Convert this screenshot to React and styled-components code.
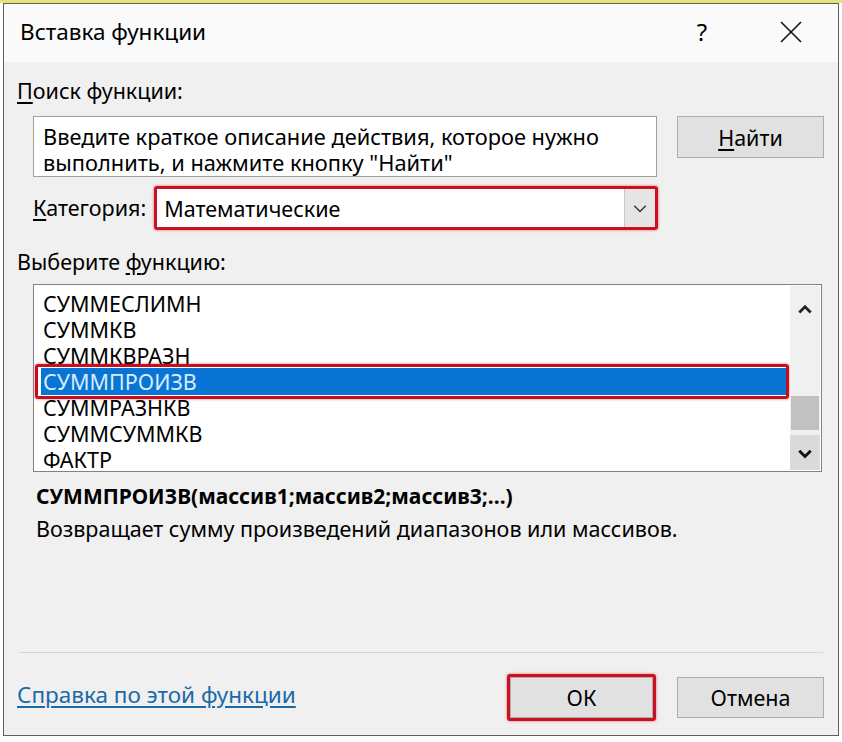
import React from "react";
import styled, { createGlobalStyle } from "styled-components";

const Global = createGlobalStyle`
  html, body { margin: 0; padding: 0; background: #ffffff; }
  body { font-family: "Noto Sans", "Open Sans", sans-serif; color: #000; }
`;

const Page = styled.div`
  width: 842px;
  height: 742px;
  padding: 3px 0 0 3px;
  box-sizing: border-box;
  background: linear-gradient(#e8e27a 0 3px, #ffffff 3px);
`;

const Dialog = styled.div`
  width: 836px;
  height: 733px;
  box-sizing: border-box;
  border: 1px solid #5e5e5e;
  background: #f0f0f0;
  display: flex;
  flex-direction: column;
`;

const TitleBar = styled.div`
  height: 58px;
  background: #fafafa;
  display: flex;
  align-items: center;
  padding: 0 0 3px 16px;
  box-sizing: border-box;
  flex-shrink: 0;
`;

const Title = styled.div`
  font-size: 22.5px;
  flex: 1;
`;

const TitleBtn = styled.div`
  width: ${p => p.$w}px;
  display: flex;
  justify-content: center;
  align-items: center;
  font-size: 24px;
`;

const Body = styled.div`
  flex: 1;
  display: flex;
  flex-direction: column;
  padding: 16px 14px 0 13px;
`;

const Label = styled.div`
  font-size: 21.5px;
  line-height: 26px;
  margin-top: ${p => p.$mt || 0}px;
`;

const U = styled.span`
  text-decoration: underline;
  text-underline-offset: 3px;
`;

const Row = styled.div`
  display: flex;
  align-items: ${p => p.$align || "center"};
  margin-top: ${p => p.$mt || 0}px;
  padding-left: ${p => p.$pl || 0}px;
`;

const SearchBox = styled.div`
  width: 624px;
  height: 61px;
  box-sizing: border-box;
  background: #fff;
  border: 1px solid #a0a0a0;
  padding: 7px 9px 0;
  font-size: 21.8px;
  line-height: 26px;
`;

const Button = styled.div`
  width: ${p => p.$w}px;
  height: ${p => p.$h}px;
  box-sizing: border-box;
  background: #e1e1e1;
  border: 1px solid #adadad;
  display: flex;
  align-items: center;
  justify-content: center;
  font-size: 21.5px;
  margin-left: ${p => p.$ml || 0}px;
`;

const RedFrame = styled.div`
  border: 3px solid #cc1020;
  border-radius: 3px;
  box-shadow: 0 0 3px rgba(210, 20, 30, 0.6);
  box-sizing: border-box;
  margin-left: ${p => p.$ml || 0}px;
  display: flex;
`;

const Select = styled.div`
  width: 498px;
  height: 38px;
  background: #fff;
  display: flex;
  align-items: center;
  font-size: 21.5px;
`;

const SelectText = styled.div`
  flex: 1;
  padding-left: 7px;
`;

const SelectArrow = styled.div`
  width: 30px;
  height: 100%;
  background: #e5e5e5;
  border-left: 1px solid #c8c8c8;
  display: flex;
  align-items: center;
  justify-content: center;
`;

const List = styled.div`
  margin: 9px 0 0 16px;
  width: 789px;
  height: 188px;
  box-sizing: border-box;
  border: 1px solid #828282;
  background: #fff;
  display: flex;
`;

const Items = styled.div`
  flex: 1;
  padding: 6px 0 0 1px;
  display: flex;
  flex-direction: column;
`;

const Item = styled.div`
  height: 26px;
  line-height: 26px;
  font-size: 21.5px;
  padding-left: 8px;
  color: #000;
`;

const SelWrap = styled.div`
  margin: -5px 0 -4px 0;
  border: 3px solid #c4101e;
  border-radius: 3px;
  box-shadow: 0 0 3px rgba(210, 20, 30, 0.6);
  padding: 1px 0 1px 3px;
  width: 754px;
  box-sizing: border-box;
`;

const SelItem = styled.div`
  height: 27px;
  line-height: 27px;
  font-size: 21.5px;
  padding-left: 2px;
  background: #0a74d4;
  color: #d6ecff;
`;

const Scroll = styled.div`
  width: 30px;
  margin: 1px 1px 1px 0;
  background: #f0f0f0;
  display: flex;
  flex-direction: column;
`;

const ScrollBtn = styled.div`
  height: ${p => p.$h}px;
  display: flex;
  align-items: center;
  justify-content: center;
  background: ${p => (p.$dark ? "#dadada" : "#f0f0f0")};
`;

const Track = styled.div`
  flex: 1;
  display: flex;
  flex-direction: column;
  justify-content: flex-end;
  padding-bottom: 5px;
`;

const Thumb = styled.div`
  height: 34px;
  background: #c1c1c1;
  margin: 0 1px;
`;

const Signature = styled.div`
  font-size: 21px;
  font-weight: 700;
  margin: 11px 0 0 19px;
  line-height: 26px;
`;

const Desc = styled.div`
  font-size: 21.5px;
  margin: 7px 0 0 19px;
  line-height: 26px;
`;

const Spacer = styled.div`
  flex: 1;
`;

const Separator = styled.div`
  height: 1px;
  background: #d6d6d6;
  margin: 0 0 0 2px;
  width: 804px;
`;

const Footer = styled.div`
  display: flex;
  align-items: center;
  height: 82px;
  padding-top: 6px;
  box-sizing: border-box;
`;

const Link = styled.a`
  font-size: 22.5px;
  color: #1a6aa8;
  text-decoration: underline;
  text-underline-offset: 3px;
  flex: 1;
  margin-top: -6px;
`;

const Chevron = ({ dir = "down", size = 14, sw = 1.2, color = "#333" }) => (
  <svg width={size} height={size} viewBox="0 0 14 14">
    <polyline
      points={dir === "down" ? "2,5 7,10 12,5" : "2,10 7,5 12,10"}
      fill="none"
      stroke={color}
      strokeWidth={sw}
    />
  </svg>
);

const items = ["СУММЕСЛИМН", "СУММКВ", "СУММКВРАЗН"];
const items2 = ["СУММРАЗНКВ", "СУММСУММКВ", "ФАКТР"];

export default function App() {
  return (
    <>
      <Global />
      <Page>
        <Dialog>
          <TitleBar>
            <Title>Вставка функции</Title>
            <TitleBtn $w={82}>?</TitleBtn>
            <TitleBtn $w={95}>
              <svg width="24" height="24" viewBox="0 0 24 24">
                <line x1="2" y1="2" x2="22" y2="22" stroke="#111" strokeWidth="1.6" />
                <line x1="22" y1="2" x2="2" y2="22" stroke="#111" strokeWidth="1.6" />
              </svg>
            </TitleBtn>
          </TitleBar>
          <Body>
            <Label>
              <U>П</U>оиск функции:
            </Label>
            <Row $align="flex-start" $mt={12} $pl={16}>
              <SearchBox>
                Введите краткое описание действия, которое нужно выполнить, и нажмите кнопку "Найти"
              </SearchBox>
              <Button $w={147} $h={42} $ml={20}>
                <span>
                  <U>Н</U>айти
                </span>
              </Button>
            </Row>
            <Row $mt={9} $pl={16}>
              <Label>
                <U>К</U>атегория:
              </Label>
              <RedFrame $ml={8}>
                <Select>
                  <SelectText>Математические</SelectText>
                  <SelectArrow>
                    <Chevron size={16} />
                  </SelectArrow>
                </Select>
              </RedFrame>
            </Row>
            <Label $mt={19}>
              Выберите <U>ф</U>ункцию:
            </Label>
            <List>
              <Items>
                {items.map(t => (
                  <Item key={t}>{t}</Item>
                ))}
                <SelWrap>
                  <SelItem>СУММПРОИЗВ</SelItem>
                </SelWrap>
                {items2.map(t => (
                  <Item key={t}>{t}</Item>
                ))}
              </Items>
              <Scroll>
                <ScrollBtn $h={46}>
                  <Chevron dir="up" size={16} sw={2.4} color="#222" />
                </ScrollBtn>
                <Track>
                  <Thumb />
                </Track>
                <ScrollBtn $h={35} $dark>
                  <Chevron size={16} sw={2.6} color="#111" />
                </ScrollBtn>
              </Scroll>
            </List>
            <Signature>СУММПРОИЗВ(массив1;массив2;массив3;...)</Signature>
            <Desc>Возвращает сумму произведений диапазонов или массивов.</Desc>
            <Spacer />
            <Separator />
            <Footer>
              <Link>Справка по этой функции</Link>
              <RedFrame>
                <Button $w={143} $h={41}>ОК</Button>
              </RedFrame>
              <Button $w={147} $h={41} $ml={21}>
                Отмена
              </Button>
            </Footer>
          </Body>
        </Dialog>
      </Page>
    </>
  );
}
